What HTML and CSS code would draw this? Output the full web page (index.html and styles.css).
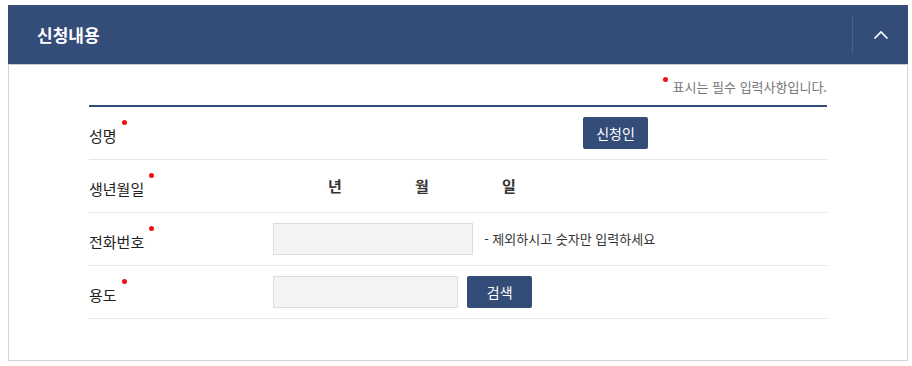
FILE: index.html
```
<!DOCTYPE html>
<html lang="ko">
<head>
    <meta charset="UTF-8">
    <title>신청내용</title>
    <link rel="stylesheet" href="styles.css">
</head>
<body>
<div class="panel">
    <div class="panel_head">
        <h2 class="panel_title">신청내용</h2>
        <button class="toggle_btn" type="button" aria-label="접기">
            <svg width="16" height="10" viewBox="0 0 16 10">
                <polyline points="1.5,8.5 8,2 14.5,8.5" fill="none" stroke="#fff" stroke-width="1.6"/>
            </svg>
        </button>
    </div>
    <div class="panel_body">
        <p class="required_note"><span class="req"></span>표시는 필수 입력사항입니다.</p>
        <table class="form_tab">
            <tbody>
            <tr>
                <th><span class="label">성명<span class="req"></span></span></th>
                <td><div class="cell_name"><button class="btn" type="button">신청인</button></div></td>
            </tr>
            <tr>
                <th><span class="label">생년월일<span class="req"></span></span></th>
                <td>
                    <div class="birth">
                        <span class="unit">년</span>
                        <span class="unit">월</span>
                        <span class="unit">일</span>
                    </div>
                </td>
            </tr>
            <tr>
                <th><span class="label">전화번호<span class="req"></span></span></th>
                <td>
                    <input class="field field_phone" type="text">
                    <span class="hint">- 제외하시고 숫자만 입력하세요</span>
                </td>
            </tr>
            <tr>
                <th><span class="label">용도<span class="req"></span></span></th>
                <td>
                    <input class="field field_use" type="text">
                    <button class="btn btn_search" type="button">검색</button>
                </td>
            </tr>
            </tbody>
        </table>
    </div>
</div>
</body>
</html>
```
FILE: styles.css
```
body {
    margin: 0;
    font-family: "Noto Sans CJK KR", "Noto Sans", sans-serif;
    color: #222;
    background: #fff;
}

.panel {
    width: 898px;
    margin: 5px 0 0 8px;
    border: 1px solid #d4d4d4;
    border-top: none;
}

.panel_head {
    display: flex;
    align-items: center;
    justify-content: space-between;
    height: 59px;
    margin: 0 -1px 0 -1px;
    background: #344d78;
    border-bottom: 1px solid #c8ccd4;
}

.panel_title {
    margin: 0 0 0 29px;
    font-size: 17px;
    font-weight: bold;
    color: #fff;
}

.toggle_btn {
    display: flex;
    align-items: center;
    justify-content: center;
    width: 56px;
    height: 39px;
    padding: 0;
    border: none;
    border-left: 1px solid #4b6290;
    background: transparent;
}

.panel_body {
    padding: 0 80px 41px;
}

.required_note {
    box-sizing: border-box;
    margin: 0;
    padding-top: 12px;
    height: 40px;
    text-align: right;
    font-size: 13px;
    color: #777;
}

.req {
    display: inline-block;
    width: 5px;
    height: 5px;
    margin-right: 5px;
    border-radius: 50%;
    background: #f01010;
    vertical-align: 10px;
}

.label .req {
    margin: 0 0 0 5px;
    vertical-align: 17px;
}

.form_tab {
    width: 100%;
    border-collapse: collapse;
    border-top: 2px solid #344d78;
}

.form_tab tr {
    height: 53px;
    border-bottom: 1px solid #e6e6e6;
}

.form_tab th {
    width: 184px;
    padding: 0;
    text-align: left;
    font-size: 15px;
    font-weight: normal;
    color: #222;
}

.form_tab td {
    padding: 0;
    font-size: 15px;
}

.cell_name {
    padding-left: 310px;
}

.btn {
    height: 32px;
    width: 65px;
    padding: 0;
    border: none;
    border-radius: 2px;
    background: #344d78;
    color: #fff;
    font-family: inherit;
    font-size: 14px;
    vertical-align: middle;
}

.btn_search {
    margin-left: 5px;
}

.birth {
    display: flex;
    padding-left: 55px;
}

.unit {
    width: 87px;
    font-weight: bold;
    color: #333;
}

.field {
    height: 32px;
    box-sizing: border-box;
    border: 1px solid #dcdcdc;
    background: #f4f4f4;
    vertical-align: middle;
}

.field_phone {
    width: 200px;
}

.field_use {
    width: 185px;
}

.hint {
    margin-left: 7px;
    font-size: 13px;
    color: #333;
    vertical-align: middle;
}
```
